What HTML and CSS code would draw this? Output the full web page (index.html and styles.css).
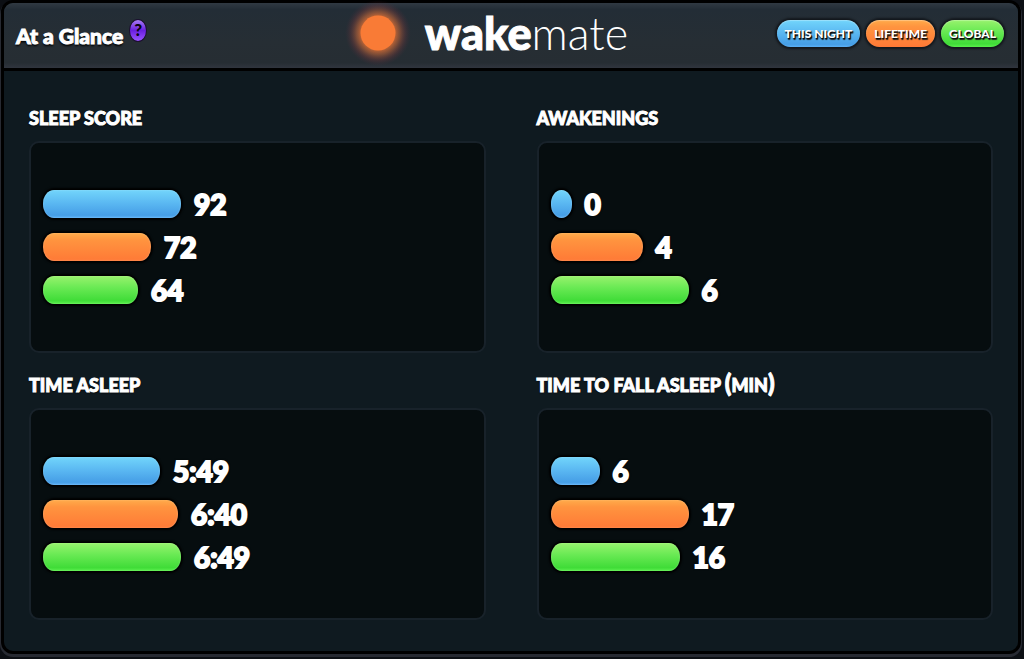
FILE: index.html
```html
<!DOCTYPE html>
<html lang="en">
<head>
<meta charset="utf-8">
<meta name="viewport" content="width=device-width, initial-scale=1">
<title>WakeMate – At a Glance</title>
<link rel="stylesheet" href="styles.css">
</head>
<body>
<main class="frame">
  <header class="topbar">
    <div class="heading">
      <h1 class="title">At a Glance</h1>
      <button class="help" type="button" aria-label="Help">?</button>
    </div>
    <a class="logo" href="#">
      <svg class="sun" width="66" height="66" viewBox="0 0 66 66" aria-hidden="true">
        <defs>
          <radialGradient id="glow">
            <stop offset="0.5" stop-color="#f97b36" stop-opacity="0.75"/>
            <stop offset="0.66" stop-color="#d06a3a" stop-opacity="0.5"/>
            <stop offset="0.84" stop-color="#8a3a3c" stop-opacity="0.24"/>
            <stop offset="1" stop-color="#5a2a3c" stop-opacity="0"/>
          </radialGradient>
        </defs>
        <circle cx="33" cy="33" r="33" fill="url(#glow)"/>
        <circle cx="33" cy="33" r="17.5" fill="#f97b36"/>
      </svg>
      <span class="wordmark"><b class="wake">wake</b><span class="mate">mate</span></span>
    </a>
    <nav class="ranges" aria-label="Ranges">
      <button class="pill blue" type="button">THIS NIGHT</button>
      <button class="pill orange" type="button">LIFETIME</button>
      <button class="pill green" type="button">GLOBAL</button>
    </nav>
  </header>
  <div class="metrics">
    <section class="metric">
      <h2 class="label">SLEEP SCORE</h2>
      <div class="panel">
        <div class="row"><span class="bar blue" style="width:138px"></span><span class="value">92</span></div>
        <div class="row"><span class="bar orange" style="width:108px"></span><span class="value">72</span></div>
        <div class="row"><span class="bar green" style="width:95px"></span><span class="value">64</span></div>
      </div>
    </section>
    <section class="metric">
      <h2 class="label">AWAKENINGS</h2>
      <div class="panel">
        <div class="row"><span class="bar blue" style="width:21px"></span><span class="value">0</span></div>
        <div class="row"><span class="bar orange" style="width:92px"></span><span class="value">4</span></div>
        <div class="row"><span class="bar green" style="width:138px"></span><span class="value">6</span></div>
      </div>
    </section>
    <section class="metric">
      <h2 class="label">TIME ASLEEP</h2>
      <div class="panel">
        <div class="row"><span class="bar blue" style="width:117px"></span><span class="value">5:49</span></div>
        <div class="row"><span class="bar orange" style="width:135px"></span><span class="value">6:40</span></div>
        <div class="row"><span class="bar green" style="width:138px"></span><span class="value">6:49</span></div>
      </div>
    </section>
    <section class="metric">
      <h2 class="label">TIME TO FALL ASLEEP <span class="paren">(</span>MIN<span class="paren">)</span></h2>
      <div class="panel">
        <div class="row"><span class="bar blue" style="width:49px"></span><span class="value">6</span></div>
        <div class="row"><span class="bar orange" style="width:138px"></span><span class="value">17</span></div>
        <div class="row"><span class="bar green" style="width:129px"></span><span class="value">16</span></div>
      </div>
    </section>
  </div>
</main>
</body>
</html>
```
FILE: styles.css
```css
* { box-sizing: border-box; }

body {
  margin: 0;
  min-height: 100vh;
  display: flex;
  flex-direction: column;
  background: #0c0f14;
  color: #fff;
  font-family: Lato, "Open Sans", sans-serif;
  font-weight: 900;
}

.frame {
  flex: 1;
  display: flex;
  flex-direction: column;
  margin: 0 3px 5px 1px;
  border: 3px solid #000;
  border-radius: 12px;
  background: #0f1a20;
  box-shadow: 0 2px 0 1px #272a32;
}

.topbar {
  display: grid;
  grid-template-columns: 7fr auto 8fr;
  grid-template-rows: 60px;
  align-items: center;
  height: 68px;
  padding: 0 14px 0 12px;
  border-bottom: 3px solid #000;
  border-radius: 9px 9px 0 0;
  background: linear-gradient(#303942, #232d36 10%, #262e34 60%, #262d33 92%, #30353e);
}

.heading {
  display: flex;
  align-items: flex-end;
  gap: 6px;
}

.title {
  margin: 0;
  font-size: 21px;
  line-height: 24px;
  font-weight: 900;
  -webkit-text-stroke: 1px #fff;
  text-shadow: 0 2px 2px #000;
}

.help {
  width: 18px;
  height: 23px;
  margin-bottom: 6px;
  padding: 0;
  border: 1px solid #1c1030;
  border-radius: 50%;
  background: linear-gradient(#a87cf5, #6a1fe0 50%, #9a55ff);
  color: #08040f;
  font: 900 17px/20px Lato, sans-serif;
}

.logo {
  display: flex;
  align-items: center;
  gap: 14px;
  color: #fff;
  text-decoration: none;
}

.sun { display: block; }

.wordmark {
  font-size: 45px;
  line-height: 64px;
  white-space: nowrap;
}

.wake {
  font-weight: 900;
  -webkit-text-stroke: 1px #fff;
}

.mate { font-weight: 300; }

.ranges {
  display: flex;
  justify-content: flex-end;
  gap: 6px;
}

.pill {
  height: 27px;
  padding: 0 8px;
  border: 0;
  border-radius: 14px;
  color: #fff;
  font: 900 12px/27px Lato, sans-serif;
  text-shadow: 1px 1px 1px #000, 1px 2px 1px #222;
  box-shadow: 0 0 2px 2px #14181d, inset 0 1px 1px rgba(255, 255, 255, 0.3);
}

.blue { background: linear-gradient(#72d5fb, #59b6f1 50%, #469ee6 90%, #5bb0f5); }
.orange { background: linear-gradient(#ffab4a, #ff943f 25%, #ff7936); }
.green { background: linear-gradient(#98f26d, #6bea55 40%, #40dc38 88%, #59f04b); }

.metrics {
  flex: 1;
  display: grid;
  grid-template-columns: 1fr 1fr;
  grid-auto-rows: 1fr;
  gap: 20px 51px;
  padding: 35px 25px 31px;
}

.metric {
  display: flex;
  flex-direction: column;
}

.label {
  margin: 0 0 11px;
  font-size: 18px;
  line-height: 24px;
  font-weight: 900;
  -webkit-text-stroke: 1px #fff;
  text-shadow: 0 1px 2px #000;
}

.paren {
  font-size: 24px;
  line-height: 12px;
}

.panel {
  flex: 1;
  display: flex;
  flex-direction: column;
  justify-content: center;
  gap: 15px;
  padding: 20px 12px;
  border: 2px solid #18222a;
  border-radius: 10px;
  background: #060d0f;
}

.row {
  display: flex;
  align-items: center;
  gap: 13px;
  height: 28px;
}

.bar {
  height: 28px;
  border-radius: 11px / 14px;
  box-shadow: 0 0 2px 2px #000, inset 0 0 2px rgba(255, 255, 255, 0.3);
}

.value {
  font-size: 28px;
  line-height: 30px;
  -webkit-text-stroke: 2px #fff;
  text-shadow: 0 0 3px #000;
}
```
